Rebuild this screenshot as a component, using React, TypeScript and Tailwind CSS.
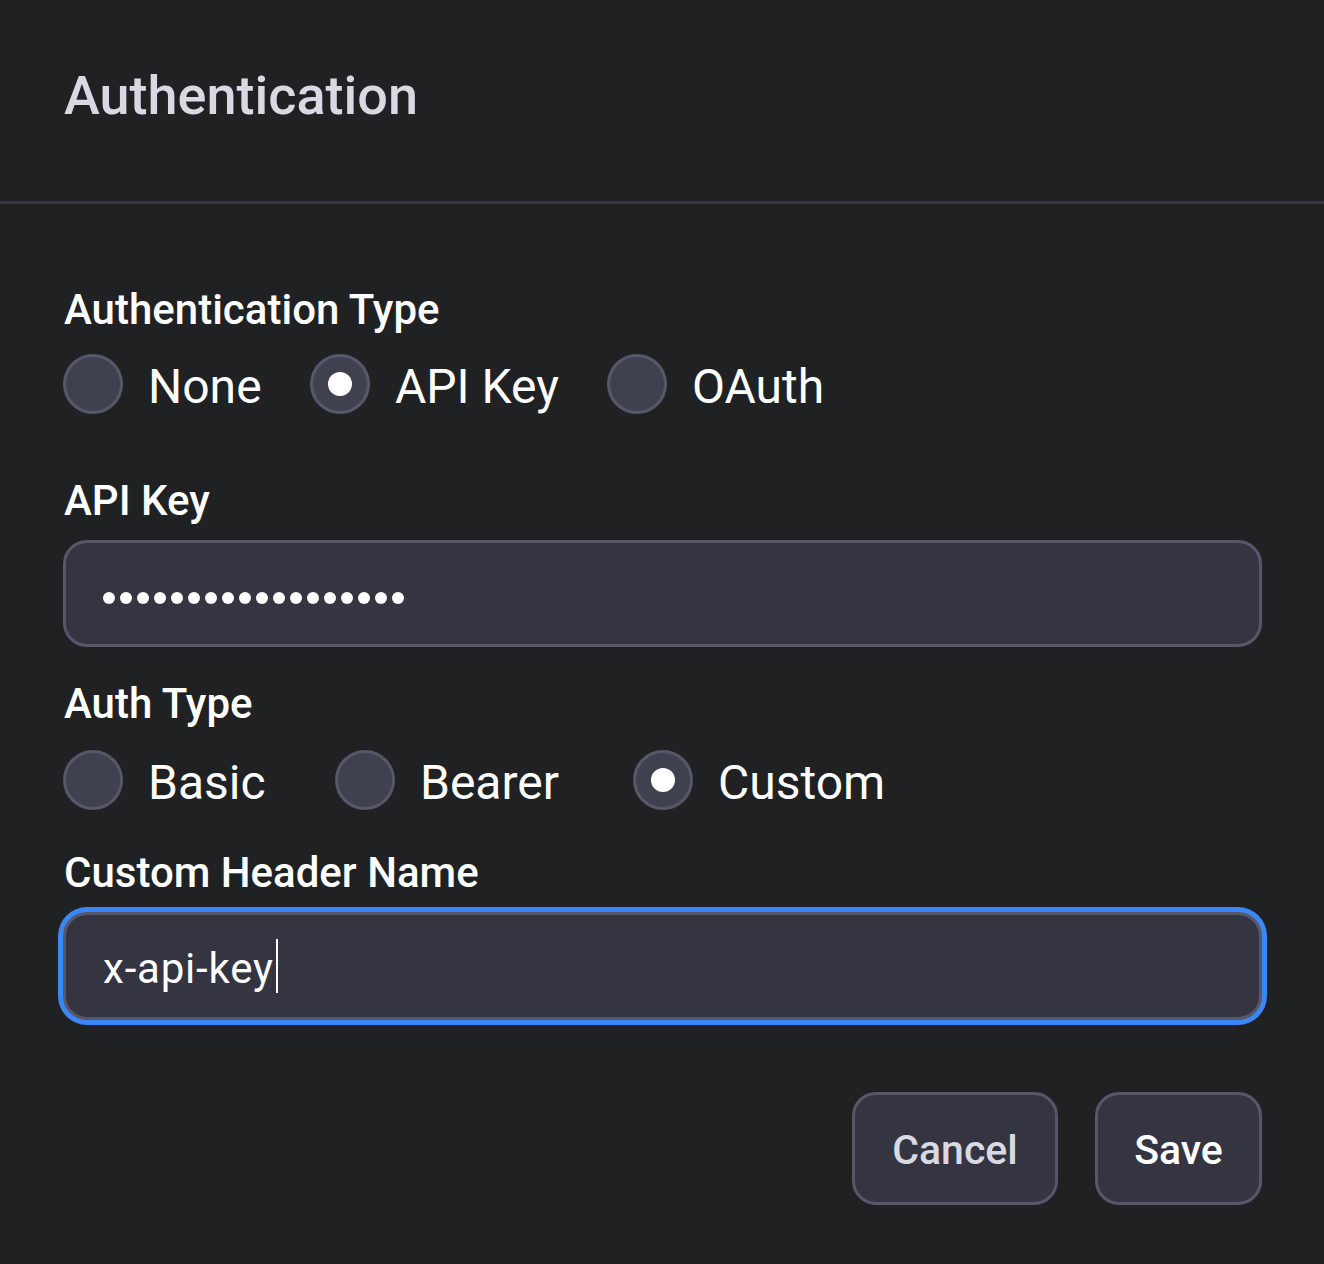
import React from "react";

function Label({ children }: { children: React.ReactNode }) {
  return (
    <div className="pl-[1px] text-[42px] leading-[48px] font-medium text-white">
      {children}
    </div>
  );
}

function Radio({
  label,
  checked,
  className,
}: {
  label: string;
  checked?: boolean;
  className?: string;
}) {
  return (
    <div className={`flex items-center ${className ?? ""}`}>
      <span className="flex h-[60px] w-[60px] shrink-0 items-center justify-center rounded-full border-[3px] border-[#565869] bg-[#40414f]">
        {checked && <span className="h-[24px] w-[24px] rounded-full bg-white" />}
      </span>
      <span className="ml-[25px] pt-[5px] text-[48px] leading-[48px] text-white">
        {label}
      </span>
    </div>
  );
}

export default function App() {
  const dots = Array.from({ length: 18 });
  return (
    <div className="min-h-[1264px] w-full bg-[#202123] font-['Roboto',sans-serif] text-white">
      <div className="h-[204px] border-b-[3px] border-[#363744] pl-[64px] pt-[64px]">
        <h1 className="text-[54px] leading-[64px] font-medium text-[#d9d9e3]">
          Authentication
        </h1>
      </div>

      <div className="pl-[63px] pr-[62px] pt-[82px]">
        <Label>Authentication Type</Label>
        <div className="mt-[20px] flex h-[60px] items-center">
          <Radio label="None" className="w-[247px]" />
          <Radio label="API Key" checked className="w-[297px]" />
          <Radio label="OAuth" />
        </div>

        <div className="mt-[63px]">
          <Label>API Key</Label>
        </div>
        <div className="mt-[15px] flex h-[107px] items-center rounded-[24px] border-[3px] border-[#565869] bg-[#343541] pl-[37px]">
          <div className="mt-[9px] flex gap-[5px]">
            {dots.map((_, i) => (
              <span key={i} className="h-[12px] w-[12px] rounded-full bg-white" />
            ))}
          </div>
        </div>

        <div className="mt-[33px]">
          <Label>Auth Type</Label>
        </div>
        <div className="mt-[22px] flex h-[60px] items-center">
          <Radio label="Basic" className="w-[272px]" />
          <Radio label="Bearer" className="w-[298px]" />
          <Radio label="Custom" checked />
        </div>

        <div className="mt-[39px]">
          <Label>Custom Header Name</Label>
        </div>
        <div className="mt-[15px] flex h-[108px] items-center rounded-[24px] border-[3px] border-[#565869] bg-[#343541] pl-[37px] ring-[5px] ring-[#3b87f7]">
          <span className="pt-[5px] text-[42px] leading-[48px] tracking-[0.8px] text-white">
            x-api-key
          </span>
          <span className="ml-[2px] h-[54px] w-[2px] bg-white" />
        </div>

        <div className="mt-[72px] flex justify-end gap-[37px]">
          <button className="flex h-[113px] w-[206px] items-center justify-center rounded-[24px] border-[3px] border-[#565869] bg-[#343541] pt-[2px] text-[41px] leading-[48px] font-medium text-[#d9d9e3]">
            Cancel
          </button>
          <button className="flex h-[113px] w-[167px] items-center justify-center rounded-[24px] border-[3px] border-[#565869] bg-[#343541] pt-[2px] text-[41px] leading-[48px] font-medium text-white">
            Save
          </button>
        </div>
      </div>
    </div>
  );
}
